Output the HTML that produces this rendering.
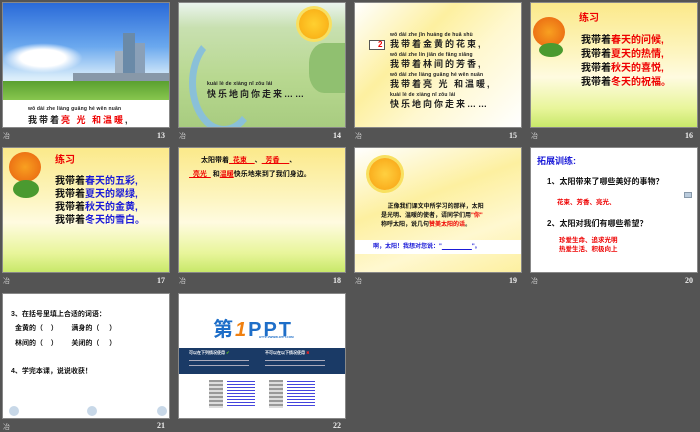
<!DOCTYPE html>
<html><head><meta charset="utf-8"><style>
*{margin:0;padding:0;box-sizing:border-box}
body{width:700px;height:431px;background:#545454;position:relative;overflow:hidden;font-family:"Liberation Sans","Noto Sans CJK SC",sans-serif}
.s{position:absolute;width:168px;height:126px;overflow:hidden;border:1px solid #888}
.n{position:absolute;color:#eee;font-size:8px;font-weight:bold;font-family:"Liberation Serif",serif}
.i{position:absolute;color:#ccc;font-size:7px}
.t{position:absolute;white-space:nowrap;font-weight:bold;line-height:1}
.yel{background:linear-gradient(#fbe98a 0%,#fdf5c0 40%,#fffbe0 60%,#e8f59a 85%,#c8e86a 100%)}
.r{color:#e00}.b{color:#1a1ad8}
.py{font-size:5px;color:#222;letter-spacing:.2px}
.cn{font-size:9px;color:#222;letter-spacing:2px}
</style></head><body>

<!-- 13 -->
<div class="s" style="left:2px;top:2px;background:linear-gradient(#2a6ad8 0%,#6aa8ee 35%,#d8ecfa 60%,#fff 75%);">
 <div style="position:absolute;left:0;top:40px;width:80px;height:30px;background:radial-gradient(#fff 40%,transparent 70%)"></div>
 <div style="position:absolute;left:120px;top:30px;width:12px;height:52px;background:#6a8aa8"></div>
 <div style="position:absolute;left:132px;top:40px;width:10px;height:42px;background:#8aa0b8"></div>
 <div style="position:absolute;left:112px;top:48px;width:8px;height:34px;background:#a0b0c0"></div>
 <div style="position:absolute;left:70px;top:70px;width:98px;height:12px;background:#8898a8"></div>
 <div style="position:absolute;left:0;top:78px;width:168px;height:20px;background:linear-gradient(#5aa030,#8ac850)"></div>
 <div style="position:absolute;left:0;top:97px;width:168px;height:29px;background:#fff"></div>
 <div class="t py" style="left:25px;top:104px">wǒ dài zhe liàng guāng hé wēn nuǎn</div>
 <div class="t cn" style="left:25px;top:113px">我带着<span class="r">亮 光 和温暖</span>,</div>
</div>
<div class="i" style="left:3px;top:131px">冶</div><div class="n" style="left:157px;top:131px">13</div>

<!-- 14 -->
<div class="s" style="left:178px;top:2px;background:linear-gradient(#eaf4ee 0%,#c8e0b0 20%,#b8d890 60%,#a8cc80 100%);">
 <div style="position:absolute;left:10px;top:30px;width:70px;height:100px;border:7px solid #8ac0d8;border-radius:50%;border-right-color:transparent;border-top-color:transparent"></div>
 <div style="position:absolute;left:120px;top:6px;width:30px;height:30px;border-radius:50%;background:radial-gradient(#ffd030,#f8a810);box-shadow:0 0 0 3px #f8e060"></div>
 <div style="position:absolute;left:130px;top:40px;width:38px;height:50px;background:#90c070;border-radius:40% 0 0 40%"></div>
 <div class="t py" style="left:28px;top:79px">kuài lè de xiàng nǐ zǒu lái</div>
 <div class="t cn" style="left:28px;top:87px">快乐地向你走来……</div>
</div>
<div class="i" style="left:179px;top:131px">冶</div><div class="n" style="left:333px;top:131px">14</div>

<!-- 15 -->
<div class="s" style="left:354px;top:2px;background:linear-gradient(135deg,#fff 0%,#fdf0a0 35%,#fff8d0 60%,#fff 100%);">
 <div style="position:absolute;left:14px;top:37px;width:16px;height:10px;border:1px solid #555;background:#fff"></div>
 <div class="t" style="left:23px;top:38px;font-size:8px;color:#e00">2</div>
 <div class="t py" style="left:35px;top:30px">wǒ dài zhe jīn huáng de huā shù</div>
 <div class="t cn" style="left:35px;top:37px">我带着金黄的花束,</div>
 <div class="t py" style="left:35px;top:50px">wǒ dài zhe lín jiān de fāng xiāng</div>
 <div class="t cn" style="left:35px;top:57px">我带着林间的芳香,</div>
 <div class="t py" style="left:35px;top:70px">wǒ dài zhe liàng guāng hé wēn nuǎn</div>
 <div class="t cn" style="left:35px;top:77px">我带着亮 光 和温暖,</div>
 <div class="t py" style="left:35px;top:90px">kuài lè de xiàng nǐ zǒu lái</div>
 <div class="t cn" style="left:35px;top:97px">快乐地向你走来……</div>
</div>
<div class="i" style="left:355px;top:131px">冶</div><div class="n" style="left:509px;top:131px">15</div>

<!-- 16 -->
<div class="s yel" style="left:530px;top:2px;">
 <div style="position:absolute;left:2px;top:14px;width:32px;height:30px;border-radius:50%;background:radial-gradient(#f8a020,#e86010)"></div>
 <div style="position:absolute;left:8px;top:40px;width:24px;height:14px;border-radius:50%;background:#4a9a30"></div>
 <div class="t" style="left:48px;top:11px;font-size:10px;color:#e00">练习</div>
 <div class="t" style="left:50px;top:31px;font-size:10px;line-height:14px;color:#111">我带着<span class="r">春天的问候,</span><br>我带着<span class="r">夏天的热情,</span><br>我带着<span class="r">秋天的喜悦,</span><br>我带着<span class="r">冬天的祝福。</span></div>
</div>
<div class="i" style="left:531px;top:131px">冶</div><div class="n" style="left:685px;top:131px">16</div>

<!-- 17 -->
<div class="s yel" style="left:2px;top:147px;">
 <div style="position:absolute;left:6px;top:4px;width:32px;height:30px;border-radius:50%;background:radial-gradient(#f8a020,#e86010)"></div>
 <div style="position:absolute;left:10px;top:32px;width:26px;height:18px;border-radius:50%;background:#4a9a30"></div>
 <div class="t" style="left:52px;top:8px;font-size:10px;color:#e00">练习</div>
 <div class="t" style="left:52px;top:27px;font-size:10px;line-height:13px;color:#111">我带着<span class="b">春天的五彩,</span><br>我带着<span class="b">夏天的翠绿,</span><br>我带着<span class="b">秋天的金黄,</span><br>我带着<span class="b">冬天的雪白。</span></div>
</div>
<div class="i" style="left:3px;top:276px">冶</div><div class="n" style="left:157px;top:276px">17</div>

<!-- 18 -->
<div class="s yel" style="left:178px;top:147px;">
 <div class="t" style="left:22px;top:9px;font-size:7px;color:#111">太阳带着<u class="r">&nbsp;&nbsp;花束&nbsp;&nbsp;&nbsp;&nbsp;</u>、<u class="r">&nbsp;&nbsp;芳香&nbsp;&nbsp;&nbsp;&nbsp;&nbsp;</u>、</div>
 <div class="t" style="left:10px;top:23px;font-size:7px;color:#111"><u class="r">&nbsp;&nbsp;亮光&nbsp;&nbsp;</u> 和<u class="r">温暖</u>快乐地来到了我们身边。</div>
</div>
<div class="i" style="left:179px;top:276px">冶</div><div class="n" style="left:333px;top:276px">18</div>

<!-- 19 -->
<div class="s" style="left:354px;top:147px;background:linear-gradient(160deg,#fff 0%,#fdf0a0 40%,#fff8d0 70%,#fdf0a0 100%);">
 <div style="position:absolute;left:14px;top:10px;width:32px;height:32px;border-radius:50%;background:radial-gradient(#ffd040,#f8a010);box-shadow:0 0 0 3px #f8e060"></div>
 <div class="t" style="left:26px;top:55px;font-size:6px;line-height:9px;color:#111">&nbsp;&nbsp;&nbsp;&nbsp;正像我们课文中所学习的那样，太阳<br>是光明、温暖的使者，请同学们用<span class="r">"你"</span><br>称呼太阳，说几句<span class="r">赞美太阳的话</span>。</div>
 <div style="position:absolute;left:0;top:92px;width:168px;height:14px;background:#fff"></div>
 <div class="t" style="left:18px;top:96px;font-size:6px;color:#1a1ad8">啊，太阳！我想对您说："<u>&nbsp;&nbsp;&nbsp;&nbsp;&nbsp;&nbsp;&nbsp;&nbsp;&nbsp;&nbsp;&nbsp;&nbsp;&nbsp;&nbsp;&nbsp;&nbsp;&nbsp;&nbsp;</u>"。</div>
</div>
<div class="i" style="left:355px;top:276px">冶</div><div class="n" style="left:509px;top:276px">19</div>

<!-- 20 -->
<div class="s" style="left:530px;top:147px;background:#fff;">
 <div class="t" style="left:6px;top:9px;font-size:9px;color:#1a1ad8">拓展训练:</div>
 <div class="t" style="left:16px;top:30px;font-size:8px;color:#111">1、太阳带来了哪些美好的事物？</div>
 <div class="t" style="left:26px;top:52px;font-size:6.5px;color:#e00">花束、芳香、亮光、</div>
 <div class="t" style="left:16px;top:72px;font-size:8px;color:#111">2、太阳对我们有哪些希望？</div>
 <div class="t" style="left:28px;top:88px;font-size:6.5px;line-height:9px;color:#e00">珍爱生命、追求光明<br>热爱生活、积极向上</div>
 <div style="position:absolute;left:153px;top:44px;width:8px;height:6px;background:#bcd;border:1px solid #89a"></div>
</div>
<div class="i" style="left:531px;top:276px">冶</div><div class="n" style="left:685px;top:276px">20</div>

<!-- 21 -->
<div class="s" style="left:2px;top:293px;background:#fff;">
 <div class="t" style="left:8px;top:17px;font-size:7px;color:#111">3、在括号里填上合适的词语：</div>
 <div class="t" style="left:12px;top:31px;font-size:7px;color:#111">金黄的（&nbsp;&nbsp;&nbsp;&nbsp;）&nbsp;&nbsp;&nbsp;&nbsp;&nbsp;&nbsp;&nbsp;满身的（&nbsp;&nbsp;&nbsp;&nbsp;&nbsp;）</div>
 <div class="t" style="left:12px;top:46px;font-size:7px;color:#111">林间的（&nbsp;&nbsp;&nbsp;&nbsp;）&nbsp;&nbsp;&nbsp;&nbsp;&nbsp;&nbsp;&nbsp;关闭的（&nbsp;&nbsp;&nbsp;&nbsp;&nbsp;）</div>
 <div class="t" style="left:8px;top:74px;font-size:7px;color:#111">4、学完本课，说说收获！</div>
 <div style="position:absolute;left:6px;top:112px;width:10px;height:10px;border-radius:50%;background:#c8d8e8"></div>
 <div style="position:absolute;left:84px;top:112px;width:10px;height:10px;border-radius:50%;background:#c8d8e8"></div>
 <div style="position:absolute;left:154px;top:112px;width:10px;height:10px;border-radius:50%;background:#c8d8e8"></div>
</div>
<div class="i" style="left:3px;top:422px">冶</div><div class="n" style="left:157px;top:421px">21</div>

<!-- 22 -->
<div class="s" style="left:178px;top:293px;background:#fff;">
 <div class="t" style="left:34px;top:26px;font-size:20px;color:#1e6ec8;letter-spacing:2px">第<span style="color:#f08010;font-style:italic">1</span>PPT</div>
 <div class="t" style="left:80px;top:42px;font-size:3px;color:#1e6ec8">HTTP://WWW.1PPT.COM</div>
 <div style="position:absolute;left:0;top:54px;width:168px;height:26px;background:#1a3a66"></div>
 <div class="t" style="left:10px;top:57px;font-size:4px;color:#fff">可以在下列情况使用 <span style="color:#6c2">✔</span></div>
 <div class="t" style="left:86px;top:57px;font-size:4px;color:#fff">不可以在以下情况使用 <span style="color:#e22">✖</span></div>
 <div style="position:absolute;left:10px;top:66px;width:60px;height:1px;background:#aab"></div>
 <div style="position:absolute;left:10px;top:71px;width:60px;height:1px;background:#aab"></div>
 <div style="position:absolute;left:86px;top:66px;width:60px;height:1px;background:#aab"></div>
 <div style="position:absolute;left:86px;top:71px;width:60px;height:1px;background:#aab"></div>
 <div style="position:absolute;left:30px;top:86px;width:14px;height:28px;background:repeating-linear-gradient(#999 0 2px,#ddd 2px 4px)"></div>
 <div style="position:absolute;left:48px;top:87px;width:28px;height:26px;background:repeating-linear-gradient(#44d 0 1px,#fff 1px 3px)"></div>
 <div style="position:absolute;left:90px;top:86px;width:14px;height:28px;background:repeating-linear-gradient(#999 0 2px,#ddd 2px 4px)"></div>
 <div style="position:absolute;left:108px;top:87px;width:28px;height:26px;background:repeating-linear-gradient(#44d 0 1px,#fff 1px 3px)"></div>
</div>
<div class="n" style="left:333px;top:421px">22</div>

</body></html>
